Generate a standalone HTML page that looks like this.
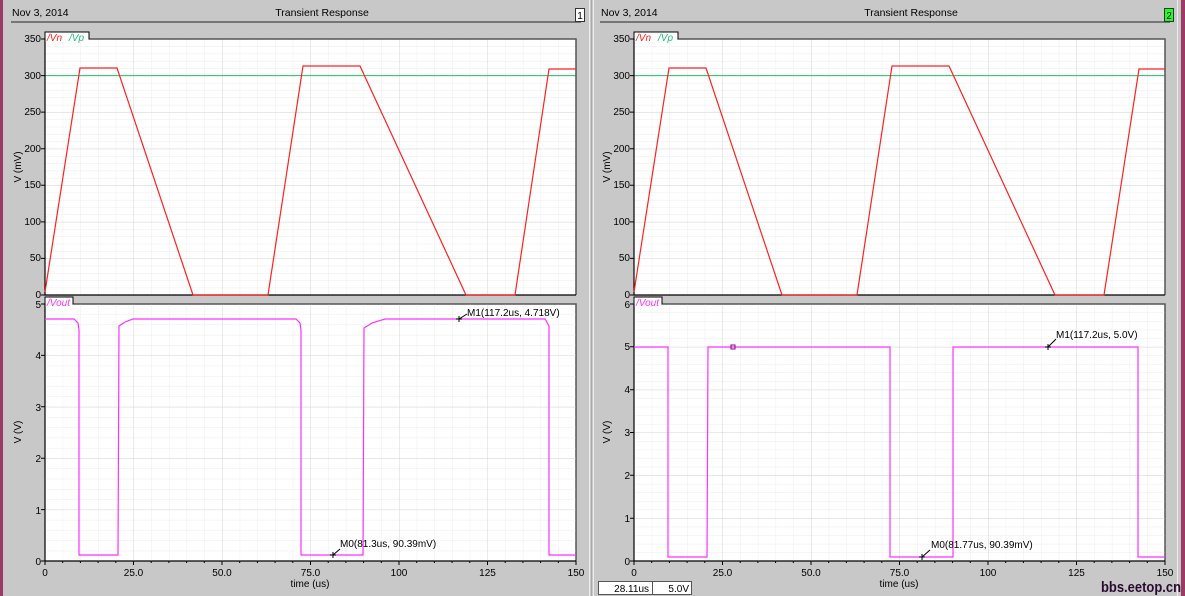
<!DOCTYPE html>
<html><head><meta charset="utf-8"><style>
html,body{margin:0;padding:0;width:1185px;height:596px;overflow:hidden;background:#c8c8c8}
svg{display:block;font-family:"Liberation Sans",sans-serif}
</style></head><body>
<svg width="1185" height="596" viewBox="0 0 1185 596" xmlns="http://www.w3.org/2000/svg">
<defs>
<pattern id="tmin" x="45" y="295" width="17.7" height="7.314" patternUnits="userSpaceOnUse"><path d="M0 0H17.7M0 0V7.314" stroke="#ececec" stroke-width="1" fill="none"/></pattern>
<pattern id="tmaj" x="45" y="295" width="88.5" height="36.57" patternUnits="userSpaceOnUse"><path d="M0 0H88.5M0 0V36.57" stroke="#d6d6d6" stroke-width="1" fill="none"/></pattern>
<pattern id="lmin" x="45" y="561" width="17.7" height="10.28" patternUnits="userSpaceOnUse"><path d="M0 0H17.7M0 0V10.28" stroke="#ececec" fill="none"/></pattern>
<pattern id="lmaj" x="45" y="561" width="88.5" height="51.4" patternUnits="userSpaceOnUse"><path d="M0 0H88.5M0 0V51.4" stroke="#d6d6d6" fill="none"/></pattern>
<pattern id="rmin" x="45" y="561" width="17.7" height="8.567" patternUnits="userSpaceOnUse"><path d="M0 0H17.7M0 0V8.567" stroke="#ececec" fill="none"/></pattern>
<pattern id="rmaj" x="45" y="561" width="88.5" height="42.83" patternUnits="userSpaceOnUse"><path d="M0 0H88.5M0 0V42.83" stroke="#d6d6d6" fill="none"/></pattern>
<g id="panel">
<text x="12" y="16" font-size="10.5" fill="#000">Nov 3, 2014</text>
<text x="322" y="16" font-size="10.5" fill="#000" text-anchor="middle">Transient Response</text>
<line x1="11" y1="22" x2="581" y2="22" stroke="#444" stroke-width="1.2"/>
<rect x="45" y="39" width="531" height="256" fill="#fff"/>
<rect x="45" y="39" width="531" height="256" fill="url(#tmin)"/>
<rect x="45" y="39" width="531" height="256" fill="url(#tmaj)"/>
<line x1="45" y1="75.6" x2="576" y2="75.6" stroke="#20c060" stroke-width="1"/>
<path d="M45 39H576V295" stroke="#555" fill="none" stroke-width="1.5"/>
<path d="M45 39V295H576" stroke="#000" fill="none" stroke-width="1.2"/>
<path d="M45 39V32H89V39" fill="#fff" stroke="#000" stroke-width="1"/>
<rect x="45.6" y="32.6" width="42.8" height="9" fill="#fff"/>
<text x="47" y="41" font-size="10" font-style="italic" fill="#ff2020">/Vn</text>
<text x="69" y="41" font-size="10" font-style="italic" fill="#20c070">/Vp</text>
<g font-size="10" fill="#000" text-anchor="end">
<text x="41" y="42">350</text><text x="41" y="79">300</text><text x="41" y="115">250</text><text x="41" y="152">200</text><text x="41" y="188">150</text><text x="41" y="225">100</text><text x="41" y="261">50</text><text x="41" y="298">0</text>
</g>
<path d="M41 39H45M41 75.6H45M41 112.1H45M41 148.7H45M41 185.3H45M41 221.9H45M41 258.4H45M41 295H45" stroke="#000"/>
<text transform="translate(21,167) rotate(-90)" font-size="10" text-anchor="middle">V (mV)</text>
<rect x="45" y="304" width="531" height="257" fill="#fff"/>
<path d="M45 304H576V561" stroke="#555" fill="none" stroke-width="1.5"/>
<path d="M45 304V561H576" stroke="#000" fill="none" stroke-width="1.2"/>
<path d="M45 561V565M133.5 561V565M222 561V565M310.5 561V565M399 561V565M487.5 561V565M576 561V565" stroke="#000"/>
<path d="M62.7 561V563M80.4 561V563M98.1 561V563M115.8 561V563M151.2 561V563M168.9 561V563M186.6 561V563M204.3 561V563M239.7 561V563M257.4 561V563M275.1 561V563M292.8 561V563M328.2 561V563M345.9 561V563M363.6 561V563M381.3 561V563M416.7 561V563M434.4 561V563M452.1 561V563M469.8 561V563M505.2 561V563M522.9 561V563M540.6 561V563M558.3 561V563" stroke="#000"/>
<g font-size="10" text-anchor="middle"><text x="45" y="576">0</text><text x="133.5" y="576">25.0</text><text x="222" y="576">50.0</text><text x="310.5" y="576">75.0</text><text x="399" y="576">100</text><text x="487.5" y="576">125</text><text x="576" y="576">150</text></g>
<text x="310" y="587" font-size="10" text-anchor="middle">time (us)</text>
<text transform="translate(21,432) rotate(-90)" font-size="10" text-anchor="middle">V (V)</text>
</g>
</defs>

<rect x="0" y="0" width="3" height="596" fill="#9c3a66"/>
<rect x="1181" y="0" width="4" height="596" fill="#9c3a66"/>
<line x1="589.5" y1="0" x2="589.5" y2="596" stroke="#eee"/>
<line x1="593.5" y1="0" x2="593.5" y2="596" stroke="#eee"/>
<line x1="591.5" y1="0" x2="591.5" y2="596" stroke="#aaa"/>
<line x1="1177.5" y1="0" x2="1177.5" y2="596" stroke="#eee"/>

<use href="#panel"/>
<use href="#panel" transform="translate(589,0)"/>

<rect x="45.6" y="304.6" width="530" height="256" fill="url(#lmin)"/>
<rect x="45.6" y="304.6" width="530" height="256" fill="url(#lmaj)"/>
<g font-size="10" text-anchor="end"><text x="41" y="308">5</text><text x="41" y="359">4</text><text x="41" y="411">3</text><text x="41" y="462">2</text><text x="41" y="514">1</text><text x="41" y="565">0</text></g>
<path d="M41 304H45M41 355.4H45M41 406.8H45M41 458.2H45M41 509.6H45M41 561H45" stroke="#000"/>
<g transform="translate(589,0)"><rect x="45.6" y="304.6" width="530" height="256" fill="url(#rmin)"/><rect x="45.6" y="304.6" width="530" height="256" fill="url(#rmaj)"/></g>
<g font-size="10" text-anchor="end"><text x="630" y="308">6</text><text x="630" y="350">5</text><text x="630" y="393">4</text><text x="630" y="436">3</text><text x="630" y="479">2</text><text x="630" y="522">1</text><text x="630" y="565">0</text></g>
<path d="M630 304H634M630 346.8H634M630 389.7H634M630 432.5H634M630 475.3H634M630 518.2H634M630 561H634" stroke="#000"/>

<path d="M45 304V297H73V304" fill="#fff" stroke="#000"/>
<rect x="45.6" y="297.6" width="26.8" height="9" fill="#fff"/>
<text x="47" y="306" font-size="10" font-style="italic" fill="#ff30ff">/Vout</text>
<path d="M634 304V297H662V304" fill="#fff" stroke="#000"/>
<rect x="634.6" y="297.6" width="26.8" height="9" fill="#fff"/>
<text x="636" y="306" font-size="10" font-style="italic" fill="#ff30ff">/Vout</text>

<polyline fill="none" stroke="#ff2020" stroke-width="1.2" points="45,292 80,68 117,68 193,295 268,295 303,66 360,66 466,295 515,295 549,69 576,69"/>
<polyline fill="none" stroke="#ff2020" stroke-width="1.2" points="634,292 669,68 706,68 782,295 857,295 892,66 949,66 1055,295 1104,295 1139,69 1165,69"/>

<polyline fill="none" stroke="#ff30ff" stroke-width="1.2" points="45,319 74,319 78,323 79,330 79,555 118,555 119,326 125,322 133,319 296,319 300,323 301,330 301,555 363,555 364,328 372,323 385,319 545,319 549,326 549,555 576,555"/>
<polyline fill="none" stroke="#ff30ff" stroke-width="1.2" points="634,347 668,347 668,557 707,557 708,347 890,347 890,557 953,557 953,347 1138,347 1138,557 1165,557"/>
<rect x="731" y="345" width="4" height="4" fill="none" stroke="#800080"/>

<g font-size="10" fill="#000">
<path d="M330 555H336M333 552V558M333 555L340 549" stroke="#000" fill="none"/>
<text x="340" y="547">M0(81.3us, 90.39mV)</text>
<path d="M456 319H462M459 316V322M459 319L467 314" stroke="#000" fill="none"/>
<text x="467" y="316">M1(117.2us, 4.718V)</text>
<path d="M919 557H925M922 554V560M922 557L930 550" stroke="#000" fill="none"/>
<text x="931" y="548">M0(81.77us, 90.39mV)</text>
<path d="M1045 347H1051M1048 344V350M1048 347L1056 339" stroke="#000" fill="none"/>
<text x="1056" y="338">M1(117.2us, 5.0V)</text>
</g>

<rect x="575.5" y="8.5" width="9" height="13" fill="#fff" stroke="#333"/>
<text x="580" y="19" font-size="10" text-anchor="middle">1</text>
<rect x="1164.5" y="8.5" width="9" height="13" fill="#20ff20" stroke="#333"/>
<text x="1169" y="19" font-size="10" text-anchor="middle">2</text>

<rect x="598.5" y="581.5" width="54" height="13" fill="#fff" stroke="#555"/>
<text x="649" y="592" font-size="10" text-anchor="end">28.11us</text>
<rect x="652.5" y="581.5" width="39" height="13" fill="#fff" stroke="#555"/>
<text x="689" y="592" font-size="10" text-anchor="end">5.0V</text>

<text x="1101" y="592" font-size="15" font-weight="bold" fill="#2a0a30" font-family="Liberation Sans,sans-serif" textLength="80" lengthAdjust="spacingAndGlyphs">bbs.eetop.cn</text>
</svg>
</body></html>
